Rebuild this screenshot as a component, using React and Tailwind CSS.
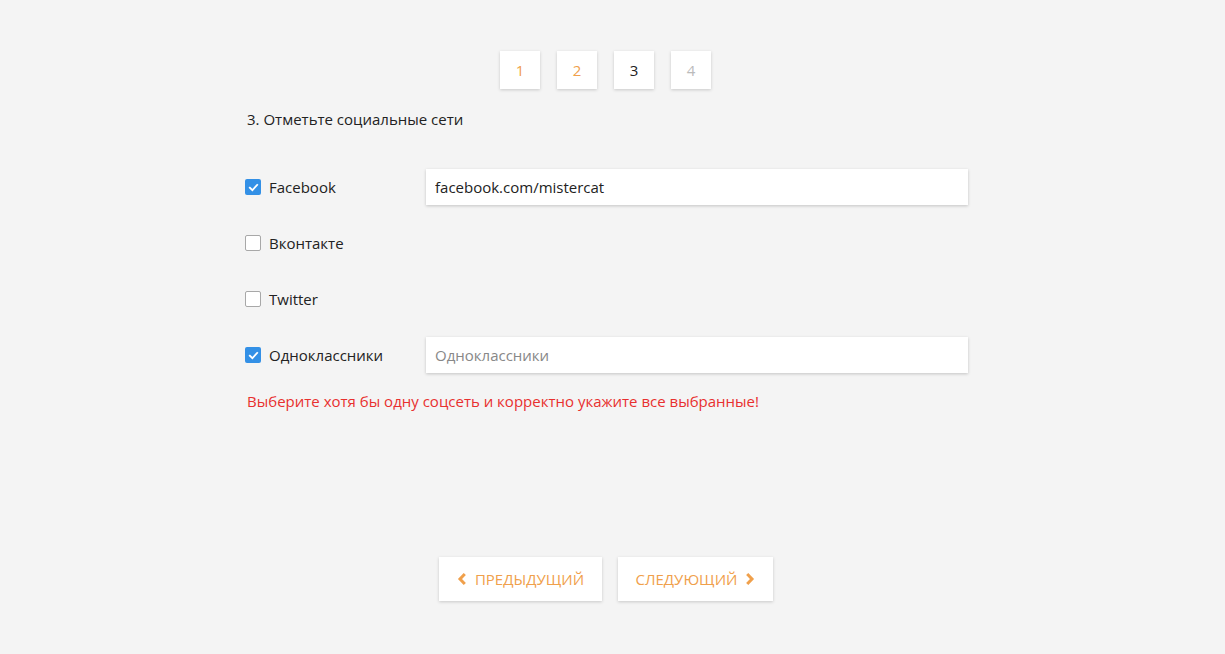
import React from 'react';

const font = { fontFamily: '"Open Sans", "Noto Sans", sans-serif' };

function Check({ checked }) {
    if (checked) {
        return (
            <span className="flex h-[16px] w-[16px] items-center justify-center rounded-[2px] bg-[#3390e6]">
                <svg width="11" height="11" viewBox="0 0 12 12" fill="none">
                    <path d="M2 6.2 L4.8 9 L10 3.2" stroke="white" strokeWidth="2" strokeLinecap="square" />
                </svg>
            </span>
        );
    }
    return <span className="h-[16px] w-[16px] rounded-[2px] border border-[#a8a8a8] bg-white" />;
}

const rows = [
    { name: 'Facebook', checked: true, value: 'facebook.com/mistercat' },
    { name: 'Вконтакте', checked: false },
    { name: 'Twitter', checked: false },
    { name: 'Одноклассники', checked: true, value: '', placeholder: 'Одноклассники' },
];

export default function App() {
    const steps = [
        { n: 1, cls: 'text-[#f0a04b]' },
        { n: 2, cls: 'text-[#f0a04b]' },
        { n: 3, cls: 'text-[#222]' },
        { n: 4, cls: 'text-[#bbb]' },
    ];
    return (
        <div className="min-h-[654px] w-full bg-[#f4f4f4]" style={font}>
            <div className="w-[1212px]">
                <div className="mx-auto w-[724px] pt-[51px]">
                    <div className="flex justify-center gap-[17px] pr-[1px]">
                        {steps.map((s) => (
                            <div
                                key={s.n}
                                className={`flex h-[38px] w-[40px] items-center justify-center bg-white text-[15px] shadow-[0_1px_3px_rgba(0,0,0,0.18)] ${s.cls}`}
                            >
                                {s.n}
                            </div>
                        ))}
                    </div>

                    <div className="mt-[19px] pl-[3px] text-[15px] leading-[22px] text-[#222]">
                        3. Отметьте социальные сети
                    </div>

                    <div className="mt-[39px] flex flex-col gap-[20px]">
                        {rows.map((r) => (
                            <div key={r.name} className="flex h-[36px] items-center">
                                <div className="flex w-[182px] items-center gap-[8px] pl-[1px]">
                                    <Check checked={r.checked} />
                                    <span className="text-[15px] text-[#222]">{r.name}</span>
                                </div>
                                {r.checked && (
                                    <input
                                        className="h-[36px] flex-1 bg-white px-[9px] text-[15px] text-[#222] shadow-[0_1px_3px_rgba(0,0,0,0.2)] outline-none placeholder:text-[#888]"
                                        defaultValue={r.value}
                                        placeholder={r.placeholder}
                                        style={font}
                                    />
                                )}
                            </div>
                        ))}
                    </div>

                    <div className="mt-[17px] pl-[3px] text-[15px] leading-[22px] text-[#e8302f]">
                        Выберите хотя бы одну соцсеть и корректно укажите все выбранные!
                    </div>

                    <div className="mt-[145px] flex justify-center gap-[16px]">
                        <button className="flex h-[44px] w-[163px] items-center justify-center gap-[8px] bg-white text-[15px] uppercase text-[#f0a04b] shadow-[0_1px_3px_rgba(0,0,0,0.18)]" style={font}>
                            <svg width="10" height="14" viewBox="0 0 10 14" fill="none">
                                <path d="M7.8 2 L3 7 L7.8 12" stroke="#f0a04b" strokeWidth="3" />
                            </svg>
                            Предыдущий
                        </button>
                        <button className="flex h-[44px] w-[155px] items-center justify-center gap-[8px] bg-white text-[15px] uppercase text-[#f0a04b] shadow-[0_1px_3px_rgba(0,0,0,0.18)]" style={font}>
                            Следующий
                            <svg width="10" height="14" viewBox="0 0 10 14" fill="none">
                                <path d="M2.2 2 L7 7 L2.2 12" stroke="#f0a04b" strokeWidth="3" />
                            </svg>
                        </button>
                    </div>
                </div>
            </div>
        </div>
    );
}
